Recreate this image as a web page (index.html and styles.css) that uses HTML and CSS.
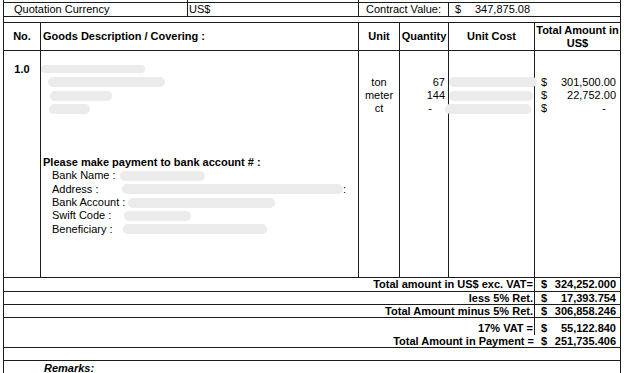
FILE: index.html
```html
<!DOCTYPE html>
<html>
<head>
<meta charset="utf-8">
<link rel="stylesheet" href="styles.css">
</head>
<body>
<div class="sheet">
  <!-- cut-off row -->
  <div class="c s12"></div>
  <div class="c s3"></div>
  <div class="c s47"></div>

  <!-- quotation row -->
  <div class="c s12 qlabel">Quotation Currency</div>
  <div class="c s3 qcur">US$</div>
  <div class="c s45 center">Contract Value:</div>
  <div class="c s67 qval"><span class="cur">$</span><span>347,875.08</span></div>

  <!-- spacer -->
  <div class="c full"></div>

  <!-- header -->
  <div class="c hd center">No.</div>
  <div class="c s23 hd left">Goods Description / Covering :</div>
  <div class="c hd center">Unit</div>
  <div class="c hd center">Quantity</div>
  <div class="c hd center">Unit Cost</div>
  <div class="c hd center two">Total Amount in<br>US$</div>

  <!-- body -->
  <div class="c body">
    <div class="ln no">1.0</div>
  </div>
  <div class="c s23 body">
    <div class="ln"><span class="pill" style="margin-left:0;width:104px;height:8px"></span></div>
    <div class="ln"><span class="pill" style="margin-left:7px;width:117px"></span></div>
    <div class="ln"><span class="pill" style="margin-left:9px;width:62px"></span></div>
    <div class="ln"><span class="pill" style="margin-left:8px;width:41px"></span></div>
    <div class="ln"></div>
    <div class="ln"></div>
    <div class="ln"></div>
    <div class="ln pay">Please make payment to bank account # :</div>
    <div class="ln bank"><span class="blabel">Bank Name :</span><span class="pill" style="margin-left:0;width:85px"></span></div>
    <div class="ln bank"><span class="blabel">Address :</span><span class="pill" style="margin-left:2px;width:221px"></span><span class="colon">:</span></div>
    <div class="ln bank"><span class="blabel">Bank Account :</span><span class="pill" style="margin-left:8px;width:147px"></span></div>
    <div class="ln bank"><span class="blabel">Swift Code :</span><span class="pill" style="margin-left:4px;width:67px"></span></div>
    <div class="ln bank"><span class="blabel">Beneficiary :</span><span class="pill" style="margin-left:3px;width:144px"></span></div>
  </div>
  <div class="c body">
    <div class="ln"></div>
    <div class="ln mid">ton</div>
    <div class="ln mid">meter</div>
    <div class="ln mid">ct</div>
  </div>
  <div class="c body">
    <div class="ln"></div>
    <div class="ln qty">67</div>
    <div class="ln qty">144</div>
    <div class="ln qty"><span class="dash-q">-</span></div>
  </div>
  <div class="c body">
    <div class="ln"></div>
    <div class="ln"><span class="pill" style="margin-left:0;width:88px"></span></div>
    <div class="ln"><span class="pill" style="margin-left:0;width:84px"></span></div>
    <div class="ln"><span class="pill" style="margin-left:-4px;width:86px"></span></div>
  </div>
  <div class="c body">
    <div class="ln"></div>
    <div class="ln amt"><span class="cur">$</span><span>301,500.00</span></div>
    <div class="ln amt"><span class="cur">$</span><span>22,752.00</span></div>
    <div class="ln amt"><span class="cur">$</span><span class="dash-a">-</span></div>
  </div>

  <!-- totals -->
  <div class="c tl">Total amount in US$ exc. VAT=</div>
  <div class="c ta"><span class="cur">$</span><span>324,252.000</span></div>

  <div class="c tl">less 5% Ret.</div>
  <div class="c ta"><span class="cur">$</span><span>17,393.754</span></div>

  <div class="c tl">Total Amount minus 5% Ret.</div>
  <div class="c ta"><span class="cur">$</span><span>306,858.246</span></div>

  <div class="c tl nob vat">17% VAT =</div>
  <div class="c ta nob vat"><span class="cur">$</span><span>55,122.840</span></div>

  <div class="c tl nor topx">Total Amount in Payment =</div>
  <div class="c ta topx"><span class="cur">$</span><span>251,735.406</span></div>

  <div class="c full"></div>

  <div class="c full remarks">Remarks:</div>
</div>
</body>
</html>
```

FILE: styles.css
```css
* { box-sizing: border-box; }

html, body {
  margin: 0;
  padding: 0;
  background: #ffffff;
}

body {
  font-family: "Liberation Sans", Arial, sans-serif;
  font-size: 11px;
  color: #000;
  overflow: hidden;
}

.sheet {
  display: grid;
  grid-template-columns: 37px 147px 171px 41px 49px 86px 86px;
  grid-template-rows: 3px 14px 6px 28px 227px 14px 13px 13px 17px 13px 13px 20px;
  margin-left: 3px;
  width: 618px;
  border-left: 1px solid #1c1c1c;
}

.c {
  border-right: 1px solid #1c1c1c;
  border-bottom: 1px solid #1c1c1c;
  line-height: 13px;
  white-space: nowrap;
  display: flex;
  align-items: center;
}

.s12 { grid-column: 1 / 3; }
.s3 { grid-column: 3 / 4; }
.s47 { grid-column: 4 / 8; }
.s45 { grid-column: 4 / 6; }
.s67 { grid-column: 6 / 8; }
.s23 { grid-column: 2 / 4; }
.full { grid-column: 1 / 8; }

.center { justify-content: center; text-align: center; }
.left { justify-content: flex-start; }

.qlabel { padding-left: 10px; }
.qcur { padding-left: 1px; }
.qval { padding-left: 6px; }
.qval .cur { width: 20px; }

.hd { font-weight: bold; }
.hd.left { padding-left: 2px; }
.two { line-height: 13.5px; padding-top: 1px; }

.body {
  display: block;
  padding-top: 11.4px;
}

.ln {
  height: 13.3px;
  display: flex;
  align-items: center;
}

.no {
  justify-content: center;
  font-weight: bold;
}

.pill {
  display: inline-block;
  height: 10px;
  border-radius: 5px;
  background: #ebebeb;
  flex-shrink: 0;
}

.pay {
  font-weight: bold;
  padding-left: 2px;
  margin-top: 0.5px;
}

.bank { padding-left: 11px; }
.blabel { width: 68px; flex-shrink: 0; }
.colon { margin-left: 0; }

.mid { justify-content: center; }

.qty { justify-content: flex-end; padding-right: 3px; }
.dash-q { margin-right: 13px; }

.amt {
  justify-content: space-between;
  padding-left: 6px;
  padding-right: 4px;
}
.dash-a { margin-right: 10px; }

.tl {
  grid-column: 1 / 7;
  justify-content: flex-end;
  font-weight: bold;
  padding-right: 1px;
}

.ta {
  justify-content: space-between;
  font-weight: bold;
  padding-left: 6px;
  padding-right: 4px;
}

.nob { border-bottom: none; }
.nor { border-right: none; }
.vat { align-items: flex-end; padding-bottom: 0; }

.remarks {
  font-weight: bold;
  font-style: italic;
  align-items: flex-start;
  padding-left: 40px;
  padding-top: 1px;
  border-bottom: none;
}
```
